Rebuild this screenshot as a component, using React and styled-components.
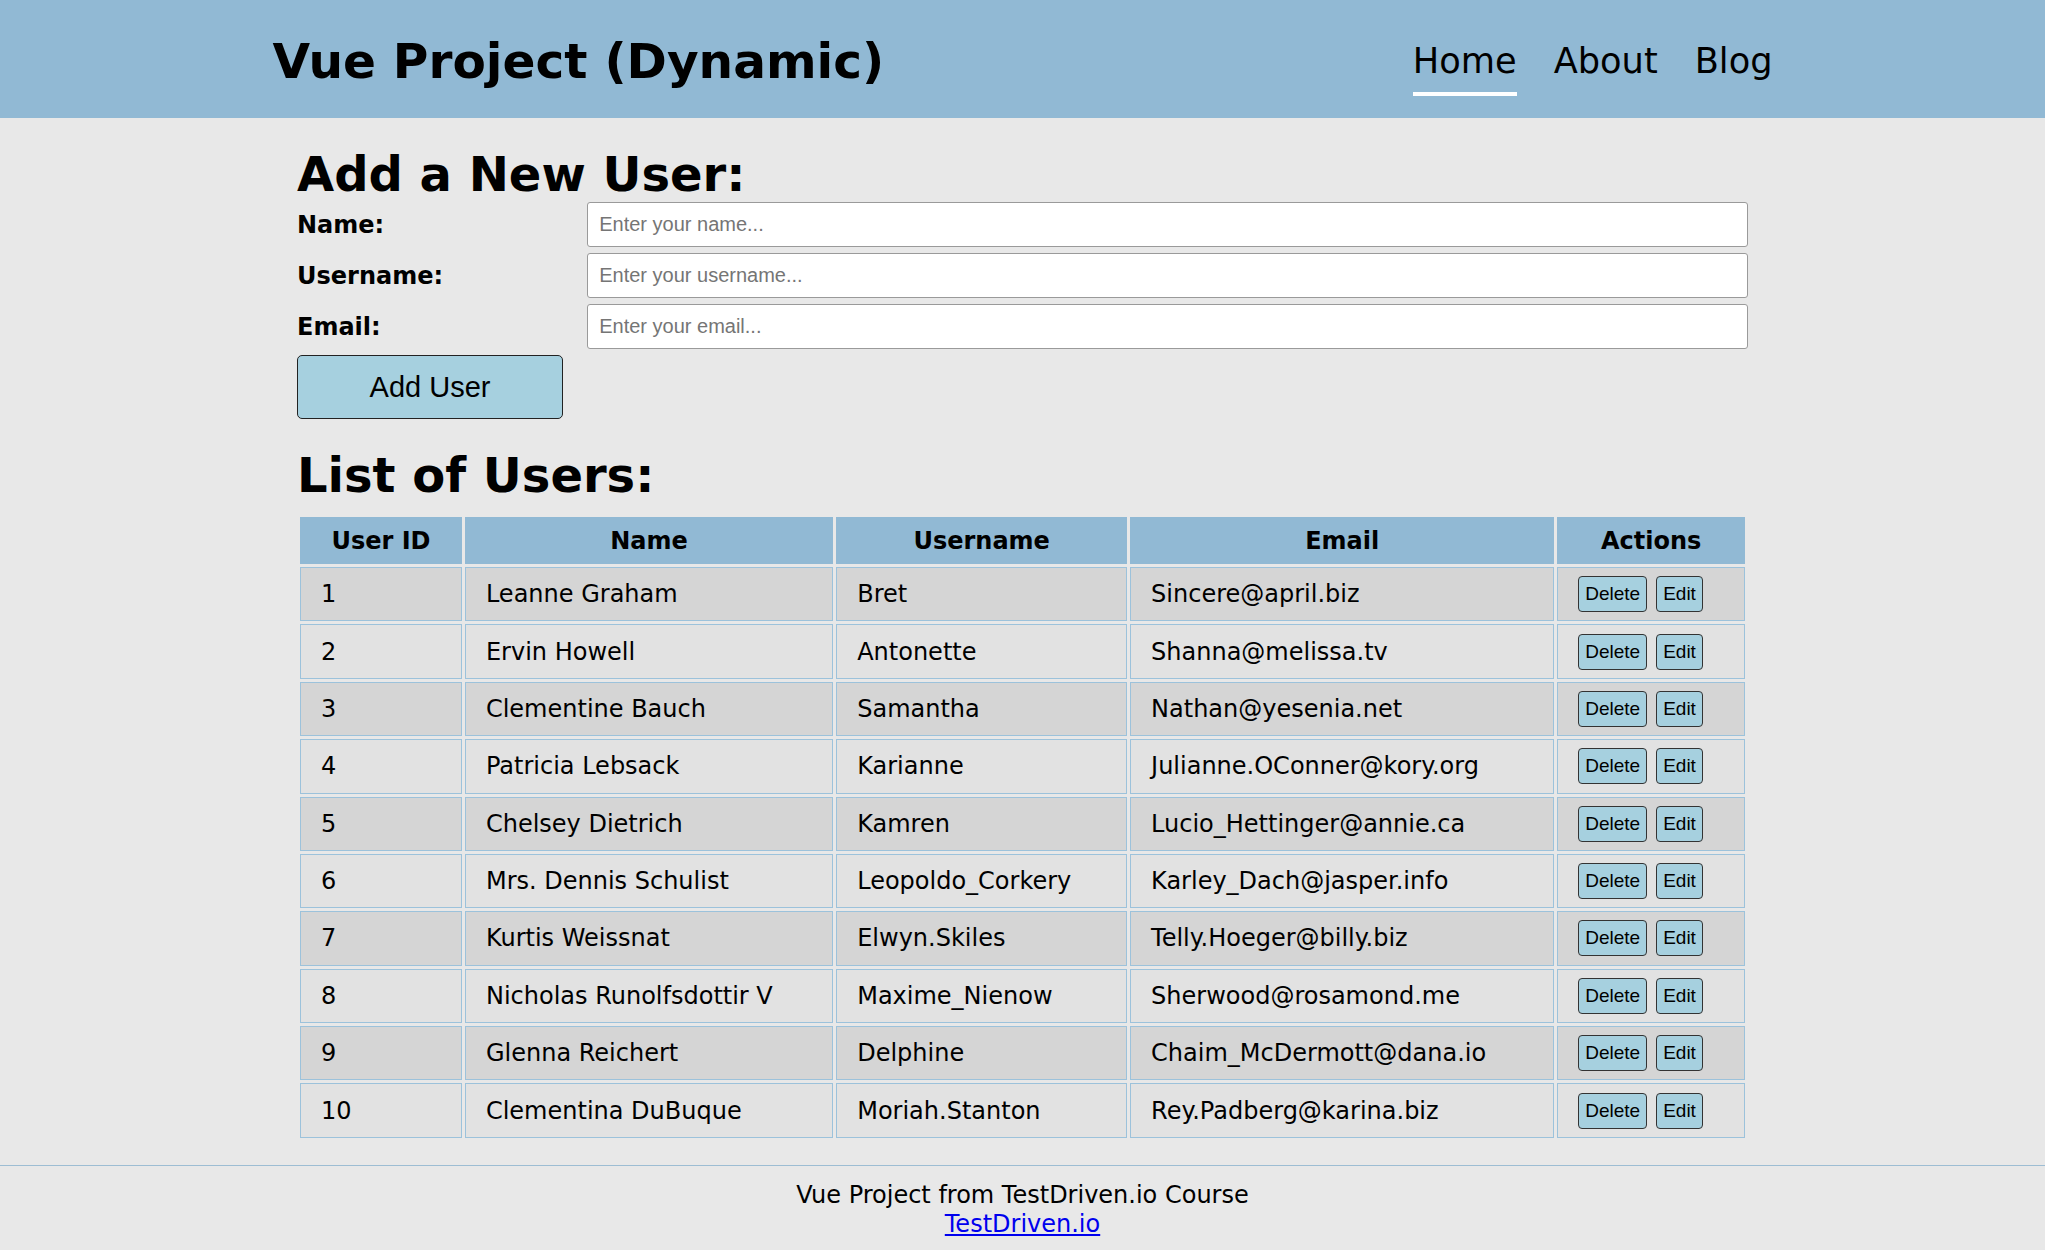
import React from "react"
import styled, { createGlobalStyle } from "styled-components"

const GlobalStyle = createGlobalStyle`
  html, body {
    margin: 0;
    padding: 0;
    background-color: #e8e8e8;
    font-family: "DejaVu Sans", Verdana, sans-serif;
    color: #000;
  }
`

const Header = styled.header`
  background-color: #91b9d4;
  height: 118px;
`

const HeaderInner = styled.div`
  width: 1500px;
  margin: 0 auto;
  display: flex;
  justify-content: space-between;
  align-items: flex-start;
`

const Title = styled.div`
  font-size: 48.6px;
  font-weight: bold;
  margin-top: 33px;
  line-height: normal;
`

const Nav = styled.nav`
  display: flex;
  gap: 37px;
  margin-top: 40px;
`

const NavItem = styled.a`
  font-size: 35.2px;
  line-height: normal;
  color: #000;
  text-decoration: none;
  padding-bottom: 11px;
  border-bottom: 4px solid ${props => (props.active ? "#fff" : "transparent")};
`

const Main = styled.main`
  width: 1451px;
  margin: 0 auto;
  padding-top: 28px;
`

const Heading = styled.h2`
  font-size: 48px;
  font-weight: bold;
  line-height: normal;
  margin: 0;
`

const Form = styled.form`
  display: grid;
  grid-template-columns: 20% 80%;
  row-gap: 6px;
  align-items: center;
  margin-bottom: 28px;
`

const Label = styled.label`
  font-size: 24px;
  font-weight: bold;
`

const Input = styled.input`
  box-sizing: border-box;
  height: 45px;
  width: 100%;
  padding: 0 11px;
  border: 1px solid #9a9a9a;
  border-radius: 3px;
  background: #fff;
  font-family: "Liberation Sans", Arial, sans-serif;
  font-size: 20px;
  &::placeholder {
    color: #757575;
  }
`

const AddButton = styled.button`
  box-sizing: border-box;
  width: 266px;
  height: 64px;
  background-color: #a6d0df;
  border: 1px solid #222;
  border-radius: 5px;
  font-family: "Liberation Sans", Arial, sans-serif;
  font-size: 29px;
  color: #000;
`

const ListHeading = styled(Heading)`
  margin-bottom: 11px;
`

const Table = styled.table`
  width: 100%;
  border-collapse: separate;
  border-spacing: 3px;
  font-size: 24px;
`

const Th = styled.th`
  box-sizing: border-box;
  width: ${props => props.w};
  background-color: #91b9d4;
  border: 1px solid #91b9d4;
  padding: 8.5px 0;
  line-height: 28px;
  font-weight: bold;
  text-align: center;
`

const Row = styled.tr`
  background-color: ${props => (props.odd ? "#d5d5d5" : "#e2e2e2")};
`

const Td = styled.td`
  border: 1px solid #9cc2db;
  padding: ${props => (props.actions ? "0 20px" : "12.2px 20px")};
  line-height: 28px;
  text-align: left;
  white-space: nowrap;
`

const SmallButton = styled.button`
  box-sizing: border-box;
  height: 36px;
  padding: 0 6px;
  margin-right: 9px;
  vertical-align: middle;
  background-color: #a6d0df;
  border: 1px solid #333;
  border-radius: 4px;
  font-family: "Liberation Sans", Arial, sans-serif;
  font-size: 19px;
  color: #000;
`

const Footer = styled.footer`
  margin-top: 24px;
  border-top: 1px solid #9dbdd3;
  padding: 15px 0 12px;
  text-align: center;
  font-size: 24px;
  line-height: 29.5px;
`

const FooterLink = styled.a`
  color: #0000ee;
  text-decoration: underline;
`

const users = [
  [1, "Leanne Graham", "Bret", "Sincere@april.biz"],
  [2, "Ervin Howell", "Antonette", "Shanna@melissa.tv"],
  [3, "Clementine Bauch", "Samantha", "Nathan@yesenia.net"],
  [4, "Patricia Lebsack", "Karianne", "Julianne.OConner@kory.org"],
  [5, "Chelsey Dietrich", "Kamren", "Lucio_Hettinger@annie.ca"],
  [6, "Mrs. Dennis Schulist", "Leopoldo_Corkery", "Karley_Dach@jasper.info"],
  [7, "Kurtis Weissnat", "Elwyn.Skiles", "Telly.Hoeger@billy.biz"],
  [8, "Nicholas Runolfsdottir V", "Maxime_Nienow", "Sherwood@rosamond.me"],
  [9, "Glenna Reichert", "Delphine", "Chaim_McDermott@dana.io"],
  [10, "Clementina DuBuque", "Moriah.Stanton", "Rey.Padberg@karina.biz"],
]

export default function App() {
  return (
    <>
      <GlobalStyle />
      <Header>
        <HeaderInner>
          <Title>Vue Project (Dynamic)</Title>
          <Nav>
            <NavItem href="#" active>Home</NavItem>
            <NavItem href="#">About</NavItem>
            <NavItem href="#">Blog</NavItem>
          </Nav>
        </HeaderInner>
      </Header>
      <Main>
        <Heading>Add a New User:</Heading>
        <Form onSubmit={e => e.preventDefault()}>
          <Label>Name:</Label>
          <Input placeholder="Enter your name..." />
          <Label>Username:</Label>
          <Input placeholder="Enter your username..." />
          <Label>Email:</Label>
          <Input placeholder="Enter your email..." />
          <AddButton type="submit">Add User</AddButton>
        </Form>
        <ListHeading>List of Users:</ListHeading>
        <Table>
          <thead>
            <tr>
              <Th w="11.3%">User ID</Th>
              <Th w="25.7%">Name</Th>
              <Th w="20.3%">Username</Th>
              <Th w="29.6%">Email</Th>
              <Th w="13.1%">Actions</Th>
            </tr>
          </thead>
          <tbody>
            {users.map((u, i) => (
              <Row key={u[0]} odd={i % 2 === 0}>
                <Td>{u[0]}</Td>
                <Td>{u[1]}</Td>
                <Td>{u[2]}</Td>
                <Td>{u[3]}</Td>
                <Td actions>
                  <SmallButton>Delete</SmallButton><SmallButton>Edit</SmallButton>
                </Td>
              </Row>
            ))}
          </tbody>
        </Table>
      </Main>
      <Footer>
        <div>Vue Project from TestDriven.io Course</div>
        <FooterLink href="#">TestDriven.io</FooterLink>
      </Footer>
    </>
  )
}
